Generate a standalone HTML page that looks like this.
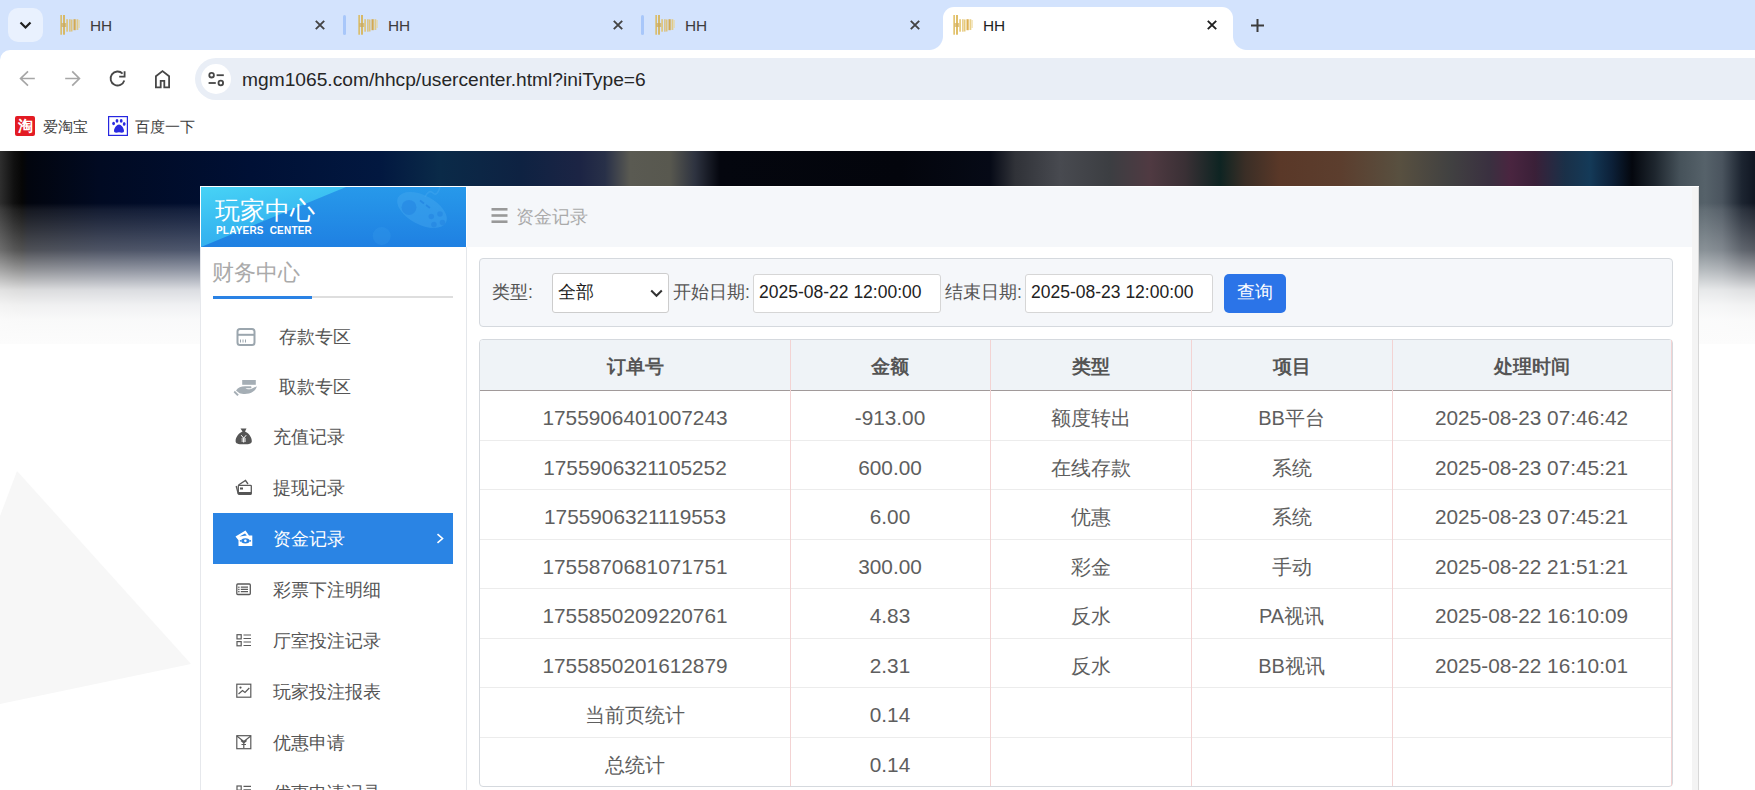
<!DOCTYPE html>
<html><head><meta charset="utf-8">
<style>
*{box-sizing:border-box;margin:0;padding:0}
html,body{width:1755px;height:790px;overflow:hidden;background:#fff;font-family:"Liberation Sans",sans-serif;position:relative}
.a{position:absolute}
#tabs{left:0;top:0;width:1755px;height:60px;background:#d3e3fd}
.tt{position:absolute;top:16.5px;font-size:15.4px;color:#3c3c3c;line-height:18px}
.sep{position:absolute;top:15px;width:3px;height:20px;border-radius:2px;background:#a8c7fa}
#toolbar{left:0;top:50px;width:1755px;height:50px;background:#fff;border-top-left-radius:10px}
#omni{left:195px;top:58px;width:1580px;height:42px;border-radius:21px;background:#e9eef6}
#url{left:242px;top:67.5px;font-size:19.2px;color:#262626;white-space:nowrap;line-height:24px}
#bm{left:0;top:100px;width:1755px;height:51px;background:#fff}
.bmt{position:absolute;top:118px;font-size:15px;color:#3c3c3c;line-height:18px;white-space:nowrap}
#page{left:0;top:151px;width:1755px;height:639px;background:#fff;overflow:hidden}
.mtx{position:absolute;font-size:17.5px;line-height:22px;white-space:nowrap}
.lbl{position:absolute;font-size:17.5px;color:#555;line-height:22px;white-space:nowrap}
.th{position:absolute;top:340px;height:50px;line-height:50px;text-align:center;font-weight:bold;font-size:18.75px;color:#555;white-space:nowrap}
.td{position:absolute;height:49px;line-height:49px;text-align:center;font-size:20.8px;color:#5e5e5e;white-space:nowrap}
.td.cj{font-size:20px}

</style></head><body>
<div id="tabs" class="a"></div>
<div class="a" style="left:8px;top:8px;width:35px;height:34px;border-radius:10px;background:#e9f1fe"></div>
<svg class="a" style="left:19px;top:19px" width="13" height="12" viewBox="0 0 13 12"><path d="M1.5 3.5 L6.5 8.5 L11.5 3.5" fill="none" stroke="#1f1f1f" stroke-width="2.2"/></svg>
<svg class="a" style="left:58px;top:14px" width="24" height="22" viewBox="0 0 24 22"><defs><filter id="fb58" x="-20%" y="-20%" width="140%" height="140%"><feGaussianBlur stdDeviation="0.55"/></filter></defs><g filter="url(#fb58)" opacity=".78"><rect x="2.3" y="1" width="1.7" height="19.7" fill="#dcb448"/><rect x="5" y="1" width="2" height="19.7" fill="#d8ae40"/><rect x="3.5" y="9" width="5" height="4" fill="#c99a30" opacity=".7"/><rect x="8.2" y="5.2" width="1.8" height="12.5" fill="#e2c060"/><rect x="11.2" y="5.2" width="1.4" height="12.5" fill="#dcb450"/><rect x="13" y="5.5" width="1.5" height="12" fill="#e0bc58"/><rect x="15.5" y="5.2" width="2.2" height="11" fill="#d49a20"/><rect x="18.5" y="5.2" width="1.8" height="10.8" fill="#e4c468"/><rect x="20.5" y="6" width="1.2" height="8" fill="#ecd490"/></g></svg>
<div class="tt" style="left:90px">HH</div>
<svg class="a" style="left:315px;top:20px" width="10" height="10" viewBox="0 0 10 10"><path d="M0.8 0.8L9.2 9.2M9.2 0.8L0.8 9.2" stroke="#444" stroke-width="1.9"/></svg>
<div class="sep" style="left:343px"></div>
<svg class="a" style="left:356px;top:14px" width="24" height="22" viewBox="0 0 24 22"><defs><filter id="fb356" x="-20%" y="-20%" width="140%" height="140%"><feGaussianBlur stdDeviation="0.55"/></filter></defs><g filter="url(#fb356)" opacity=".78"><rect x="2.3" y="1" width="1.7" height="19.7" fill="#dcb448"/><rect x="5" y="1" width="2" height="19.7" fill="#d8ae40"/><rect x="3.5" y="9" width="5" height="4" fill="#c99a30" opacity=".7"/><rect x="8.2" y="5.2" width="1.8" height="12.5" fill="#e2c060"/><rect x="11.2" y="5.2" width="1.4" height="12.5" fill="#dcb450"/><rect x="13" y="5.5" width="1.5" height="12" fill="#e0bc58"/><rect x="15.5" y="5.2" width="2.2" height="11" fill="#d49a20"/><rect x="18.5" y="5.2" width="1.8" height="10.8" fill="#e4c468"/><rect x="20.5" y="6" width="1.2" height="8" fill="#ecd490"/></g></svg>
<div class="tt" style="left:388px">HH</div>
<svg class="a" style="left:613px;top:20px" width="10" height="10" viewBox="0 0 10 10"><path d="M0.8 0.8L9.2 9.2M9.2 0.8L0.8 9.2" stroke="#444" stroke-width="1.9"/></svg>
<div class="sep" style="left:641px"></div>
<svg class="a" style="left:653px;top:14px" width="24" height="22" viewBox="0 0 24 22"><defs><filter id="fb653" x="-20%" y="-20%" width="140%" height="140%"><feGaussianBlur stdDeviation="0.55"/></filter></defs><g filter="url(#fb653)" opacity=".78"><rect x="2.3" y="1" width="1.7" height="19.7" fill="#dcb448"/><rect x="5" y="1" width="2" height="19.7" fill="#d8ae40"/><rect x="3.5" y="9" width="5" height="4" fill="#c99a30" opacity=".7"/><rect x="8.2" y="5.2" width="1.8" height="12.5" fill="#e2c060"/><rect x="11.2" y="5.2" width="1.4" height="12.5" fill="#dcb450"/><rect x="13" y="5.5" width="1.5" height="12" fill="#e0bc58"/><rect x="15.5" y="5.2" width="2.2" height="11" fill="#d49a20"/><rect x="18.5" y="5.2" width="1.8" height="10.8" fill="#e4c468"/><rect x="20.5" y="6" width="1.2" height="8" fill="#ecd490"/></g></svg>
<div class="tt" style="left:685px">HH</div>
<svg class="a" style="left:910px;top:20px" width="10" height="10" viewBox="0 0 10 10"><path d="M0.8 0.8L9.2 9.2M9.2 0.8L0.8 9.2" stroke="#444" stroke-width="1.9"/></svg>
<div class="a" style="left:943px;top:7px;width:290px;height:43px;background:#fff;border-radius:11px 11px 0 0"></div>
<div class="a" style="left:929px;top:36px;width:14px;height:14px;background:radial-gradient(circle at 0 0,#d3e3fd 13.5px,#fff 14.5px)"></div>
<div class="a" style="left:1233px;top:36px;width:14px;height:14px;background:radial-gradient(circle at 100% 0,#d3e3fd 13.5px,#fff 14.5px)"></div>
<svg class="a" style="left:951px;top:14px" width="24" height="22" viewBox="0 0 24 22"><defs><filter id="fb951" x="-20%" y="-20%" width="140%" height="140%"><feGaussianBlur stdDeviation="0.55"/></filter></defs><g filter="url(#fb951)" opacity=".78"><rect x="2.3" y="1" width="1.7" height="19.7" fill="#dcb448"/><rect x="5" y="1" width="2" height="19.7" fill="#d8ae40"/><rect x="3.5" y="9" width="5" height="4" fill="#c99a30" opacity=".7"/><rect x="8.2" y="5.2" width="1.8" height="12.5" fill="#e2c060"/><rect x="11.2" y="5.2" width="1.4" height="12.5" fill="#dcb450"/><rect x="13" y="5.5" width="1.5" height="12" fill="#e0bc58"/><rect x="15.5" y="5.2" width="2.2" height="11" fill="#d49a20"/><rect x="18.5" y="5.2" width="1.8" height="10.8" fill="#e4c468"/><rect x="20.5" y="6" width="1.2" height="8" fill="#ecd490"/></g></svg>
<div class="tt" style="left:983px;color:#1f1f1f">HH</div>
<svg class="a" style="left:1207px;top:20px" width="10" height="10" viewBox="0 0 10 10"><path d="M0.8 0.8L9.2 9.2M9.2 0.8L0.8 9.2" stroke="#1f1f1f" stroke-width="1.9"/></svg>
<svg class="a" style="left:1251px;top:19px" width="13" height="13" viewBox="0 0 13 13"><path d="M6.5 0V13M0 6.5H13" stroke="#3c3c3c" stroke-width="2"/></svg>
<div id="toolbar" class="a"></div>
<div id="omni" class="a"></div>
<div id="url" class="a">mgm1065.com/hhcp/usercenter.html?iniType=6</div>
<div id="bm" class="a"></div>
<svg class="a" style="left:0;top:50px" width="240" height="50" viewBox="0 50 240 50">
<g fill="none" stroke="#a6a6a6" stroke-width="1.7">
<path d="M34.8 78.5H20.6M28 71.3L20.6 78.5L28 85.7"/>
<path d="M65.2 78.5H79.4M72.2 71.3L79.4 78.5L72.2 85.7"/>
</g>
<g fill="none" stroke="#474747" stroke-width="1.8">
<path d="M124.3 80.5A7 7 0 1 1 122.6 73.6"/>
<path d="M119.2 76.6H124.6V71.2"/>
<path d="M155.9 87.4V76.3L162.5 71.1L169.1 76.3V87.4H164.3V80.8H160.7V87.4Z"/>
</g>
<circle cx="216" cy="79" r="15" fill="#fff"/>
<g fill="none" stroke="#474747" stroke-width="1.8">
<circle cx="211.6" cy="75.2" r="2.3"/><path d="M216.6 75.2H223.8"/>
<circle cx="220.8" cy="83" r="2.3"/><path d="M208.6 83H215.8"/>
</g>
</svg>
<div class="a" style="left:15px;top:116px;width:20px;height:20px;background:#e31b23;border-radius:2px;color:#fff;font-size:15px;line-height:20px;text-align:center;font-weight:bold">淘</div>
<svg class="a" style="left:108px;top:116px" width="20" height="20" viewBox="0 0 20 20">
<rect x="0.6" y="0.6" width="18.8" height="18.8" fill="#fff" stroke="#2626e0" stroke-width="1.2"/>
<g fill="#2b2be0"><ellipse cx="9" cy="4.9" rx="1.4" ry="1.8"/><ellipse cx="5.6" cy="7.5" rx="1.4" ry="1.8"/><ellipse cx="13.2" cy="4.9" rx="1.4" ry="1.8"/><ellipse cx="16.2" cy="7.9" rx="1.4" ry="1.8" transform="rotate(10 16.2 7.9)"/>
<path d="M11 8.5C9 8.5 6 12 6 14.8C6 17 8 17 11 16.3C14 17 16 17 16 14.8C16 12 13 8.5 11 8.5Z"/></g>
</svg>
<div class="bmt" style="left:43px">爱淘宝</div>
<div class="bmt" style="left:135px">百度一下</div>
<div id="page" class="a"></div>
<div class="a" id="banner" style="left:0;top:151px;width:1755px;height:193px;background:linear-gradient(to right,#2e2e2e 0px,#101010 14px,#060606 22px,#02050e 28px,#010a22 100px,#001035 250px,#021840 380px,#0a2a48 440px,#0e2242 520px,#1c2444 580px,#283048 605px,#5a5a52 630px,#58584f 670px,#2e3340 695px,#04060e 720px,#03050c 900px,#060a16 990px,#303238 1015px,#484a50 1060px,#3c3e42 1110px,#503a42 1150px,#3a3035 1185px,#0e2422 1220px,#3a2e26 1245px,#5a3828 1280px,#5c3e2e 1340px,#585040 1400px,#414141 1450px,#3a3040 1490px,#4a2540 1510px,#3a2038 1535px,#1a3048 1565px,#143a58 1590px,#0c2038 1612px,#04070e 1632px,#1e262e 1655px,#46525a 1680px,#56626a 1705px,#4a545e 1722px,#1c2430 1742px,#101622 1755px)"></div>
<div class="a" style="left:0;top:151px;width:1755px;height:193px;background:linear-gradient(to bottom,rgba(255,255,255,0) 0px,rgba(255,255,255,0) 52px,rgba(255,255,255,.08) 59px,rgba(255,255,255,.19) 79px,rgba(255,255,255,.3) 99px,rgba(255,255,255,.57) 119px,rgba(255,255,255,.86) 139px,rgba(255,255,255,.94) 154px,rgba(254,254,254,.98) 169px,rgba(252,252,252,.995) 184px,rgba(252,252,252,1) 193px)"></div>
<svg class="a" style="left:0;top:460px" width="200" height="250" viewBox="0 460 200 250"><polygon points="0,516 17,471 191,664 0,704" fill="#f7f7f7"/></svg>
<!-- panel -->
<div class="a" style="left:200px;top:186px;width:1499px;height:604px;background:#fff"></div>
<div class="a" style="left:200px;top:247px;width:1px;height:543px;background:#e6e8ec"></div>
<div class="a" style="left:466px;top:247px;width:1px;height:543px;background:#e4e7eb"></div>
<div class="a" style="left:467px;top:187px;width:1225px;height:60px;background:#f5f7fa"></div>
<div class="a" style="left:1692px;top:187px;width:6px;height:603px;background:#f4f4f4"></div>
<div class="a" style="left:1698px;top:187px;width:1px;height:603px;background:#d8d8d8"></div>
<!-- sidebar header -->
<div class="a" style="left:201px;top:187px;width:265px;height:60px;background:linear-gradient(to bottom,#2799ea,#1f80e2)"></div>
<div class="a" style="left:201px;top:187px;width:265px;height:60px;background:linear-gradient(170deg,#47d3f6 0%,#36b6f0 45%,#2c9ee9 100%);clip-path:polygon(0 0,145px 0,0 60px)"></div>
<svg class="a" style="left:360px;top:187px" width="106" height="60" viewBox="0 0 106 60">
<g fill="#48aaf0" opacity=".4"><ellipse cx="62" cy="23" rx="27" ry="14.5" transform="rotate(28 62 23)"/><circle cx="21.7" cy="49" r="9" opacity=".45"/></g>
<path d="M65 10Q69 2 73 6T80 0" fill="none" stroke="#48aaf0" stroke-width="1.6" opacity=".4"/>
<g fill="#1f7fe0" opacity=".45"><circle cx="49" cy="20.4" r="7.5"/><circle cx="71.3" cy="29.5" r="2.8"/><circle cx="80" cy="27" r="2.8"/><circle cx="73.9" cy="37.6" r="2.8"/><circle cx="82.5" cy="35.6" r="2.8"/></g>
<g stroke="#1f7fe0" stroke-width="1.8" opacity=".6"><path d="M60 13.5L64 16.5M66 18L70 21"/></g>
</svg>
<div class="a" style="left:215px;top:197px;font-size:24.6px;color:#fff;line-height:28px;white-space:nowrap">玩家中心</div>
<div class="a" style="left:216px;top:225px;font-size:10px;color:#fff;font-weight:bold;line-height:12px;white-space:nowrap;letter-spacing:.2px">PLAYERS&nbsp; CENTER</div>
<!-- finance tab -->
<div class="a" style="left:212px;top:259.5px;font-size:21.5px;color:#aaa;line-height:26px;white-space:nowrap">财务中心</div>
<div class="a" style="left:213px;top:296px;width:240px;height:2px;background:#dedede"></div>
<div class="a" style="left:213px;top:295.5px;width:99px;height:3px;background:#2a82e4"></div>
<!-- menu -->
<div class="a" style="left:213px;top:513px;width:240px;height:51px;background:#2a84e4"></div>
<div class="mtx" style="left:279px;top:326px;color:#555">存款专区</div>
<div class="mtx" style="left:279px;top:376px;color:#555">取款专区</div>
<div class="mtx" style="left:273px;top:426px;color:#555">充值记录</div>
<div class="mtx" style="left:273px;top:477px;color:#555">提现记录</div>
<div class="mtx" style="left:273px;top:528px;color:#fff">资金记录</div>
<div class="mtx" style="left:273px;top:579px;color:#555">彩票下注明细</div>
<div class="mtx" style="left:273px;top:630px;color:#555">厅室投注记录</div>
<div class="mtx" style="left:273px;top:681px;color:#555">玩家投注报表</div>
<div class="mtx" style="left:273px;top:732px;color:#555">优惠申请</div>
<div class="mtx" style="left:273px;top:782px;color:#555">优惠申请记录</div>
<svg class="a" style="left:436px;top:533px" width="9" height="11" viewBox="0 0 9 11"><path d="M1.5 1.2L6.5 5.5L1.5 9.8" fill="none" stroke="#fff" stroke-width="1.6"/></svg>
<!-- sidebar icons -->
<svg class="a" style="left:230px;top:320px" width="30" height="470" viewBox="230 320 30 470">
<g fill="none" stroke="#9ba6ae" stroke-width="2"><rect x="237.5" y="329" width="17" height="16" rx="2.5"/><path d="M237.5 334.8H254.5"/></g>
<g stroke="#9ba6ae" stroke-width="1"><path d="M240.5 339.5V342.5M243 339.5V342.5M245.5 339.5V342.5"/></g>
<g fill="#a5aeb5"><rect x="242.2" y="380" width="13.6" height="4.8"/><path d="M236 390.5C238 387.5 241 386.2 245 386.2H250.5C251.8 386.2 251.8 388.2 250.5 388.2H245.5C247 389.5 249 389.5 251 389C253 388.4 255 387 256.8 386.2C256.3 389.5 253 392.5 249 393.5C246 394.2 242 394 239.5 393.2Z"/><path d="M234.8 390.8L238.8 394.8L237.3 396L233.6 392.2Z"/></g>
<g fill="#555"><path d="M240.5 428.5H246.5L245 431.5C248.5 433 251.8 437 251.8 441C251.8 443.6 250 444.3 243.8 444.3C237.5 444.3 235.6 443.6 235.6 441C235.6 437 239 433 242.5 431.5Z"/></g>
<g stroke="#fff" stroke-width="1" fill="none"><path d="M241.2 435.2L243.7 438.2L246.2 435.2M243.7 438.2V442.5M241.5 439H246M241.5 441H246"/></g>
<g fill="none" stroke="#5a5a5a" stroke-width="1.3"><path d="M238.5 485L245.5 480.5L248 484"/><path d="M236.2 486L238.3 494"/><rect x="238.3" y="485.3" width="13" height="9" rx="0.8"/></g>
<g fill="#555"><rect x="238.3" y="492" width="13" height="2.5"/><rect x="240" y="487.5" width="3" height="2"/></g>
<g fill="#fff"><path d="M235.5 536.5L245.5 530.6L249 535.5H252.3V546H238.5V540.2Z"/></g>
<g fill="#2a84e4"><ellipse cx="245.4" cy="540.8" rx="4.2" ry="2.6"/><circle cx="240.6" cy="540.8" r="0.9"/><circle cx="250.2" cy="540.8" r="0.9"/><path d="M239.5 536.5L245 533.5L246.8 535.5Z"/></g>
<circle cx="245.4" cy="540.8" r="1.3" fill="#fff"/>
<g fill="none" stroke="#5a5a5a" stroke-width="1.3"><rect x="236.8" y="584" width="13.5" height="10.5" rx="1"/><path d="M240.8 587.2H248M240.8 589.4H248M240.8 591.6H248"/></g>
<g fill="#555"><rect x="238.2" y="586.6" width="1.3" height="1.3"/><rect x="238.2" y="588.8" width="1.3" height="1.3"/><rect x="238.2" y="591" width="1.3" height="1.3"/></g>
<g fill="none" stroke="#5a5a5a" stroke-width="1.2"><rect x="237" y="634.7" width="4.2" height="4.2"/><rect x="237" y="641.6" width="4.2" height="4.2"/><path d="M243.5 635H251M243.5 638.5H251M243.5 642H251M243.5 645.5H251"/></g>
<g fill="none" stroke="#5a5a5a" stroke-width="1.2"><rect x="236.8" y="684.2" width="14" height="13"/><path d="M238.5 694L242.5 690.5L245 692.5L249.3 688"/></g>
<circle cx="240.5" cy="687.6" r="1.1" fill="#555"/>
<g fill="none" stroke="#5a5a5a" stroke-width="1.2"><rect x="236.8" y="735.7" width="14" height="13"/><path d="M236.8 736L243.8 741.5L250.8 736M241 740.5L243.8 743L246.6 740.5M243.8 743V748M241.5 744.5H246"/></g>
<g fill="none" stroke="#5a5a5a" stroke-width="1.2"><rect x="237" y="786" width="4.2" height="4.2"/><path d="M243.5 786.3H251M243.5 789.8H251"/></g>
</svg>
<!-- main header -->
<svg class="a" style="left:491px;top:207px" width="17" height="17" viewBox="0 0 17 17"><g fill="#999"><rect x="0.5" y="1" width="16" height="2.6"/><rect x="0.5" y="7.2" width="16" height="2.6"/><rect x="0.5" y="13.4" width="16" height="2.6"/></g></svg>
<div class="a" style="left:516px;top:206px;font-size:17.5px;color:#aaa;line-height:22px;white-space:nowrap">资金记录</div>
<!-- filter -->
<div class="a" style="left:479px;top:258px;width:1194px;height:69px;background:#f5f7fa;border:1px solid #d5d9de;border-radius:4px"></div>
<div class="lbl" style="left:492px;top:281px">类型:</div>
<div class="a" style="left:552px;top:273px;width:117px;height:40px;background:#fff;border:1px solid #cdcdcd;border-radius:3px"></div>
<div class="lbl" style="left:558px;top:281px;color:#222">全部</div>
<svg class="a" style="left:650px;top:289px" width="13" height="9" viewBox="0 0 13 9"><path d="M1.2 1.5L6.5 6.8L11.8 1.5" fill="none" stroke="#333" stroke-width="2"/></svg>
<div class="lbl" style="left:673px;top:281px">开始日期:</div>
<div class="a" style="left:753px;top:274px;width:188px;height:39px;background:#fff;border:1px solid #d6d6d6;border-radius:3px"></div>
<div class="lbl" style="left:759px;top:281px;color:#222">2025-08-22 12:00:00</div>
<div class="lbl" style="left:945px;top:281px">结束日期:</div>
<div class="a" style="left:1025px;top:274px;width:188px;height:39px;background:#fff;border:1px solid #d6d6d6;border-radius:3px"></div>
<div class="lbl" style="left:1031px;top:281px;color:#222">2025-08-23 12:00:00</div>
<div class="a" style="left:1224px;top:274px;width:62px;height:39px;background:#2b74e8;border-radius:5px"></div>
<div class="lbl" style="left:1224px;top:281px;width:62px;text-align:center;color:#fff">查询</div>
<!-- table -->
<div class="a" style="left:479px;top:339px;width:1194px;height:448px;border:1px solid #d5d9de;border-radius:4px;overflow:hidden;background:#fff">
  <div class="a" style="left:0;top:0;width:1192px;height:50px;background:#eff3f7"></div>
</div>
<div class="a" style="left:480px;top:390px;width:1192px;height:1px;background:#a19a9a"></div>
<div class="a" style="left:480px;top:440px;width:1192px;height:1px;background:#ececec"></div>
<div class="a" style="left:480px;top:489px;width:1192px;height:1px;background:#ececec"></div>
<div class="a" style="left:480px;top:539px;width:1192px;height:1px;background:#ececec"></div>
<div class="a" style="left:480px;top:588px;width:1192px;height:1px;background:#ececec"></div>
<div class="a" style="left:480px;top:638px;width:1192px;height:1px;background:#ececec"></div>
<div class="a" style="left:480px;top:687px;width:1192px;height:1px;background:#ececec"></div>
<div class="a" style="left:480px;top:737px;width:1192px;height:1px;background:#ececec"></div>
<div class="a" style="left:790px;top:340px;width:1px;height:446px;background:#f3d3d3"></div>
<div class="a" style="left:990px;top:340px;width:1px;height:446px;background:#f3d3d3"></div>
<div class="a" style="left:1191px;top:340px;width:1px;height:446px;background:#f3d3d3"></div>
<div class="a" style="left:1392px;top:340px;width:1px;height:446px;background:#f3d3d3"></div>
<div class="a" style="left:1671px;top:340px;width:1px;height:446px;background:#f3d3d3"></div>
<div class="th" style="top:341.5px;left:480px;width:310px">订单号</div>
<div class="th" style="top:341.5px;left:790px;width:200px">金额</div>
<div class="th" style="top:341.5px;left:990px;width:201px">类型</div>
<div class="th" style="top:341.5px;left:1191px;width:201px">项目</div>
<div class="th" style="top:341.5px;left:1392px;width:279px">处理时间</div>
<div class="td" style="left:480px;width:310px;top:393px">1755906401007243</div>
<div class="td" style="left:790px;width:200px;top:393px">-913.00</div>
<div class="td cj" style="left:990px;width:201px;top:394px">额度转出</div>
<div class="td cj" style="left:1191px;width:201px;top:394px">BB平台</div>
<div class="td" style="left:1392px;width:279px;top:393px">2025-08-23 07:46:42</div>
<div class="td" style="left:480px;width:310px;top:443px">1755906321105252</div>
<div class="td" style="left:790px;width:200px;top:443px">600.00</div>
<div class="td cj" style="left:990px;width:201px;top:444px">在线存款</div>
<div class="td cj" style="left:1191px;width:201px;top:444px">系统</div>
<div class="td" style="left:1392px;width:279px;top:443px">2025-08-23 07:45:21</div>
<div class="td" style="left:480px;width:310px;top:492px">1755906321119553</div>
<div class="td" style="left:790px;width:200px;top:492px">6.00</div>
<div class="td cj" style="left:990px;width:201px;top:493px">优惠</div>
<div class="td cj" style="left:1191px;width:201px;top:493px">系统</div>
<div class="td" style="left:1392px;width:279px;top:492px">2025-08-23 07:45:21</div>
<div class="td" style="left:480px;width:310px;top:542px">1755870681071751</div>
<div class="td" style="left:790px;width:200px;top:542px">300.00</div>
<div class="td cj" style="left:990px;width:201px;top:543px">彩金</div>
<div class="td cj" style="left:1191px;width:201px;top:543px">手动</div>
<div class="td" style="left:1392px;width:279px;top:542px">2025-08-22 21:51:21</div>
<div class="td" style="left:480px;width:310px;top:591px">1755850209220761</div>
<div class="td" style="left:790px;width:200px;top:591px">4.83</div>
<div class="td cj" style="left:990px;width:201px;top:592px">反水</div>
<div class="td cj" style="left:1191px;width:201px;top:592px">PA视讯</div>
<div class="td" style="left:1392px;width:279px;top:591px">2025-08-22 16:10:09</div>
<div class="td" style="left:480px;width:310px;top:641px">1755850201612879</div>
<div class="td" style="left:790px;width:200px;top:641px">2.31</div>
<div class="td cj" style="left:990px;width:201px;top:642px">反水</div>
<div class="td cj" style="left:1191px;width:201px;top:642px">BB视讯</div>
<div class="td" style="left:1392px;width:279px;top:641px">2025-08-22 16:10:01</div>
<div class="td cj" style="left:480px;width:310px;top:691px">当前页统计</div>
<div class="td" style="left:790px;width:200px;top:690px">0.14</div>
<div class="td cj" style="left:480px;width:310px;top:741px">总统计</div>
<div class="td" style="left:790px;width:200px;top:740px">0.14</div>

</body></html>
